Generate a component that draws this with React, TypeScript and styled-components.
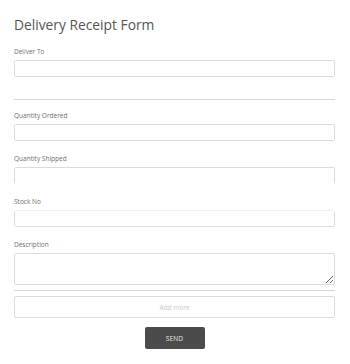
import React from "react";
import styled, { createGlobalStyle } from "styled-components";

const GlobalStyle = createGlobalStyle`
  *, *::before, *::after {
    box-sizing: border-box;
  }
  body {
    margin: 0;
    background: #fff;
    font-family: "Open Sans", "Liberation Sans", sans-serif;
  }
`;

const Form = styled.form`
  width: 350px;
  padding: 15px 15px 14px 14px;
  display: flex;
  flex-direction: column;
`;

const Title = styled.h1`
  margin: 0 0 12px;
  font-size: 13.8px;
  line-height: 20px;
  font-weight: 400;
  color: #555;
`;

const Field = styled.div<{ $last?: boolean }>`
  display: flex;
  flex-direction: column;
  margin-bottom: ${(p) => (p.$last ? "0" : "13px")};
`;

const Label = styled.label`
  font-size: 6.5px;
  line-height: 9px;
  color: #6e6e6e;
  margin-bottom: 4px;
`;

const Input = styled.input<{ $open?: boolean; $faint?: boolean }>`
  height: 17px;
  width: 100%;
  border: 1px solid #dcdcdc;
  border-top-color: ${(p) => (p.$faint ? "#f0f0f0" : "#dcdcdc")};
  border-bottom-color: ${(p) => (p.$open ? "transparent" : "#dcdcdc")};
  border-radius: 2px;
  background: #fff;
  outline: none;
  padding: 0 4px;
`;

const TextArea = styled.textarea`
  height: 32px;
  width: 100%;
  border: 1px solid #dcdcdc;
  border-radius: 2px;
  resize: vertical;
  outline: none;
  padding: 2px 4px;
  font-family: inherit;
`;

const Divider = styled.hr<{ $top: number; $bottom: number }>`
  border: none;
  border-top: 1px solid #d6d6d6;
  margin: ${(p) => `${p.$top}px 0 ${p.$bottom}px`};
  height: 0;
`;

const AddMore = styled.button`
  height: 22px;
  width: 100%;
  border: 1px solid #dcdcdc;
  border-radius: 2px;
  background: #fff;
  color: #c8c8c8;
  font-family: inherit;
  font-size: 6.5px;
  cursor: pointer;
`;

const SendButton = styled.button`
  align-self: center;
  margin-top: 9px;
  width: 60px;
  height: 22px;
  border: none;
  border-radius: 2px;
  background: #4b4b4b;
  color: #e8e8e8;
  font-family: inherit;
  font-size: 6.5px;
  letter-spacing: 0.2px;
  cursor: pointer;
`;

const App = () => {
  return (
    <>
      <GlobalStyle />
      <Form onSubmit={(e) => e.preventDefault()}>
        <Title>Delivery Receipt Form</Title>
        <Field $last>
          <Label htmlFor="deliver">Deliver To</Label>
          <Input id="deliver" />
        </Field>
        <Divider $top={22} $bottom={11} />
        <Field>
          <Label htmlFor="ordered">Quantity Ordered</Label>
          <Input id="ordered" />
        </Field>
        <Field>
          <Label htmlFor="shipped">Quantity Shipped</Label>
          <Input id="shipped" $open />
        </Field>
        <Field>
          <Label htmlFor="stock">Stock No</Label>
          <Input id="stock" $faint />
        </Field>
        <Field $last>
          <Label htmlFor="desc">Description</Label>
          <TextArea id="desc" />
        </Field>
        <Divider $top={5} $bottom={5} />
        <AddMore type="button">Add more</AddMore>
        <SendButton type="submit">SEND</SendButton>
      </Form>
    </>
  );
};

export default App;
